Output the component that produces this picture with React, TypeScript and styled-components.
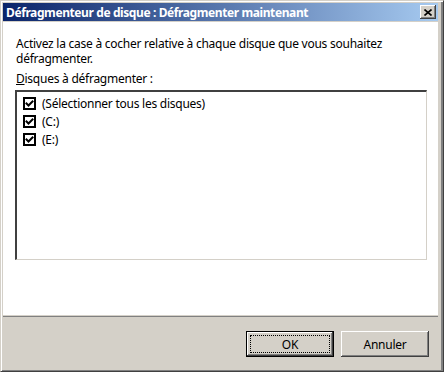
import styled, { createGlobalStyle } from "styled-components";

const GlobalStyle = createGlobalStyle`
  html, body {
    margin: 0;
    padding: 0;
    background: #d4d0c8;
  }
  body {
    font-family: "Noto Sans", "Liberation Sans", sans-serif;
    font-size: 12px;
    letter-spacing: -0.25px;
    color: #000;
  }
`;

const Window = styled.div`
  display: flex;
  flex-direction: column;
  width: 444px;
  height: 372px;
  box-sizing: border-box;
  background: #d4d0c8;
  border: 1px solid;
  border-color: #d4d0c8 #404040 #404040 #d4d0c8;
  box-shadow: inset 1px 1px 0 #fff, inset -2px -1px 0 #808080;
  padding: 2px 5px 1px 2px;
`;

const TitleBar = styled.div`
  display: flex;
  align-items: center;
  height: 18px;
  padding: 0 2px 0 3px;
  background: linear-gradient(to right, #0a246a, #a6caf0);
  color: #fff;
  font-weight: bold;
  font-size: 12px;
  letter-spacing: -0.4px;
  margin-bottom: 1px;
`;

const Title = styled.span`
  flex: 1;
  white-space: nowrap;
`;

const CloseButton = styled.div`
  display: flex;
  align-items: center;
  justify-content: center;
  width: 16px;
  height: 14px;
  box-sizing: border-box;
  background: #d4d0c8;
  box-shadow: inset -1px -1px 0 #404040, inset 1px 1px 0 #fff,
    inset -2px -2px 0 #808080;
`;

const Content = styled.div`
  flex: 1;
  background: #fff;
  padding: 14px 11px 0 13px;
  border-bottom: 1px solid #d4d0c8;
`;

const Intro = styled.p`
  margin: 0;
  line-height: 15px;
  width: 380px;
`;

const Label = styled.div`
  margin-top: 5px;
  line-height: 15px;

  u {
    text-decoration: underline;
  }
`;

const ListBox = styled.div`
  margin: 4px 0 0 -1px;
  height: 170px;
  box-sizing: border-box;
  border-top: 2px solid #404040;
  border-left: 2px solid #404040;
  border-right: 1px solid #d4d0c8;
  border-bottom: 1px solid #d4d0c8;
  padding: 2px 0 0 6px;
`;

const Row = styled.div`
  display: flex;
  align-items: center;
  gap: 6px;
  height: 18px;
`;

const Footer = styled.div`
  display: flex;
  justify-content: flex-end;
  gap: 7px;
  border-top: 1px solid #808080;
  padding: 14px 9px 0 0;
  height: 54px;
  box-sizing: border-box;
`;

const Button = styled.button<{ $default?: boolean }>`
  position: relative;
  width: 88px;
  height: 26px;
  padding: 0;
  background: #d4d0c8;
  font-family: "Noto Sans", "Liberation Sans", sans-serif;
  font-size: 12px;
  letter-spacing: -0.25px;
  color: #000;
  border: ${(p) => (p.$default ? "1px solid #000" : "none")};
  box-sizing: border-box;
  box-shadow: inset -1px -1px 0 #404040, inset 1px 1px 0 #fff,
    inset -2px -2px 0 #808080;
`;

const FocusRing = styled.span`
  position: absolute;
  inset: 3px;
  border: 1px dotted #000;
`;

const Check = () => (
  <svg width="13" height="13" viewBox="0 0 13 13">
    <rect x="1" y="1" width="11" height="11" fill="#fff" stroke="#000" strokeWidth="2" />
    <path d="M3.5 6.5 L5.5 8.5 L9.5 4.5" fill="none" stroke="#000" strokeWidth="2" strokeLinecap="square" />
  </svg>
);

const CloseX = () => (
  <svg width="8" height="7" viewBox="0 0 8 7">
    <path d="M0.5 0.5 L7.5 6.5 M7.5 0.5 L0.5 6.5" stroke="#000" strokeWidth="1.6" />
  </svg>
);

const disks = ["(Sélectionner tous les disques)", "(C:)", "(E:)"];

export default function App() {
  return (
    <>
      <GlobalStyle />
      <Window>
        <TitleBar>
          <Title>Défragmenteur de disque : Défragmenter maintenant</Title>
          <CloseButton>
            <CloseX />
          </CloseButton>
        </TitleBar>
        <Content>
          <Intro>
            Activez la case à cocher relative à chaque disque que vous souhaitez défragmenter.
          </Intro>
          <Label>
            <u>D</u>isques à défragmenter :
          </Label>
          <ListBox>
            {disks.map((d) => (
              <Row key={d}>
                <Check />
                <span>{d}</span>
              </Row>
            ))}
          </ListBox>
        </Content>
        <Footer>
          <Button $default>
            <FocusRing />
            OK
          </Button>
          <Button>Annuler</Button>
        </Footer>
      </Window>
    </>
  );
}
